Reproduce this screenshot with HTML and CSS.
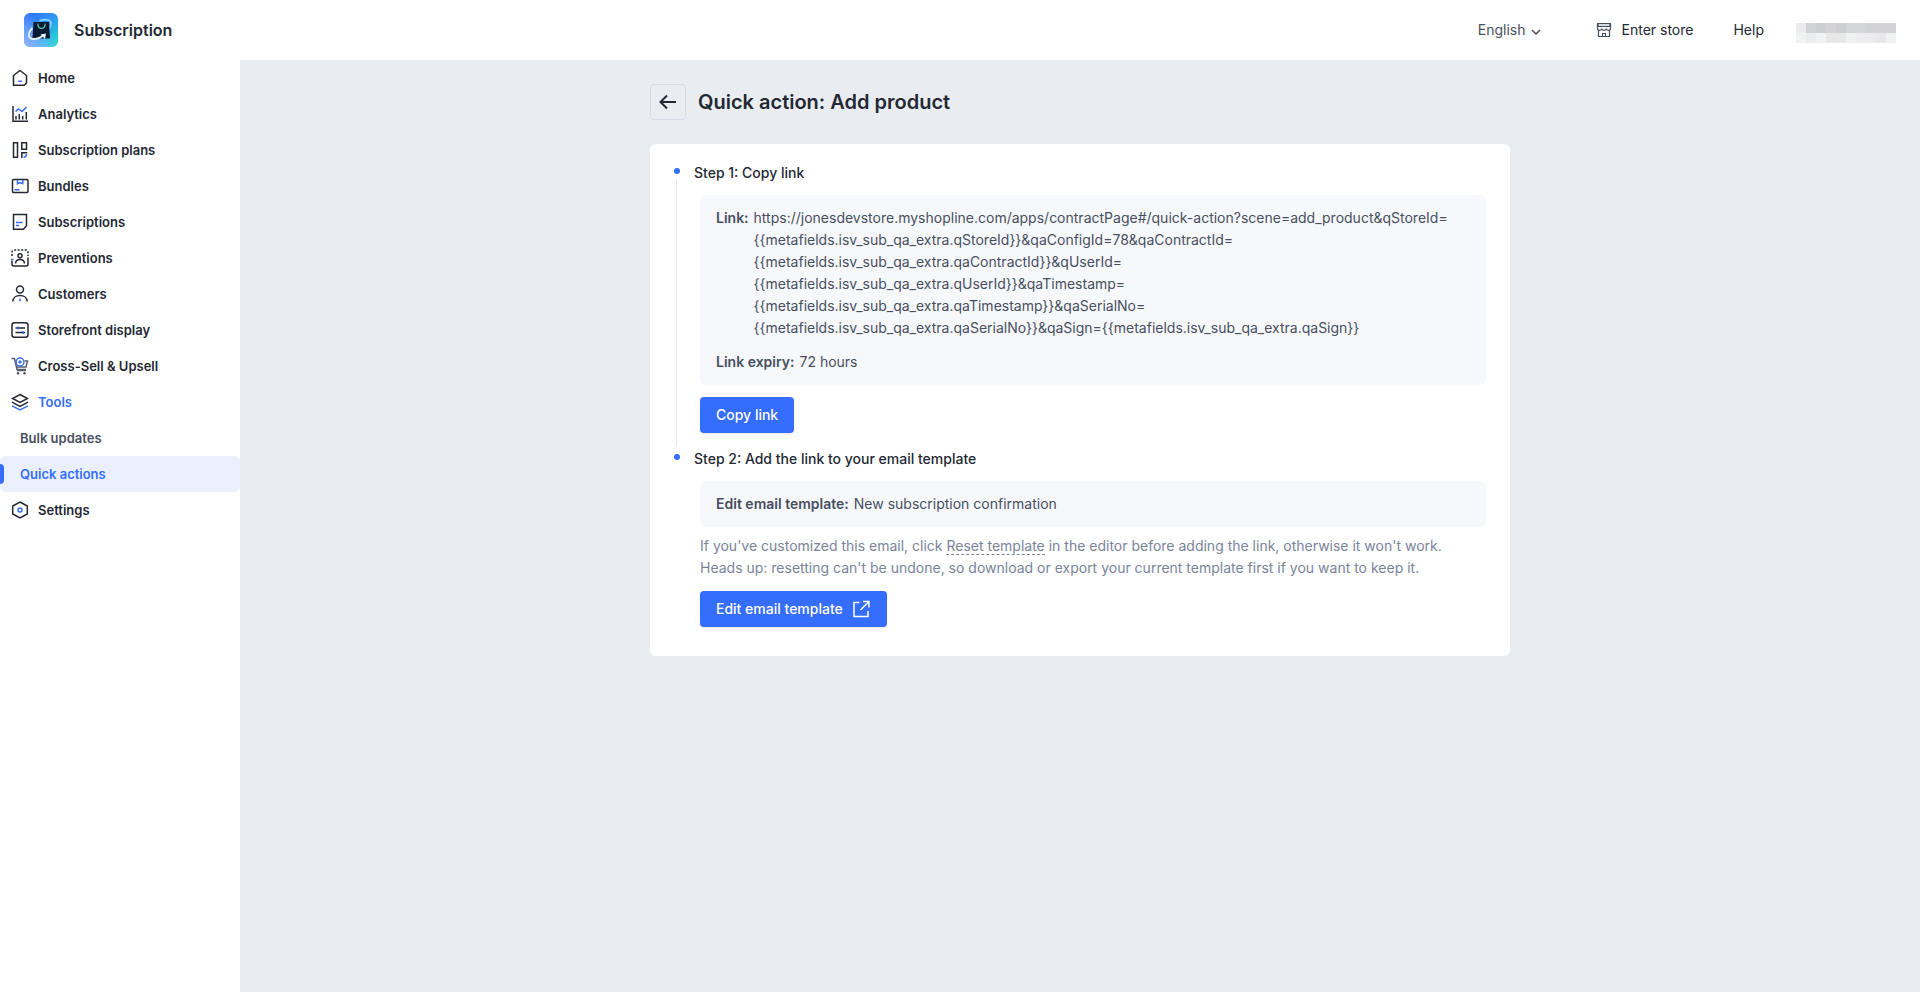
FILE: index.html
```html
<!DOCTYPE html>
<html lang="en">
<head>
    <meta charset="UTF-8">
    <meta name="viewport" content="width=device-width, initial-scale=1.0">
    <title>Subscription</title>
    <link rel="stylesheet" href="styles.css">
</head>
<body>

    <!-- Header -->
    <header class="header">
        <a class="brand" href="#">
            <svg class="logo" viewBox="0 0 34 34">
                <defs>
                    <linearGradient id="logo-bg" x1="0" y1="0" x2="1" y2="1">
                        <stop offset="0" stop-color="#2f6bff"/>
                        <stop offset="0.5" stop-color="#2f97f5"/>
                        <stop offset="1" stop-color="#1be8c8"/>
                    </linearGradient>
                    <linearGradient id="logo-glow" x1="0" y1="1" x2="0.6" y2="0.4">
                        <stop offset="0" stop-color="#9cb4ff"/>
                        <stop offset="1" stop-color="#9cb4ff" stop-opacity="0"/>
                    </linearGradient>
                </defs>
                <rect width="34" height="34" rx="6" fill="url(#logo-bg)"/>
                <rect width="34" height="34" rx="6" fill="url(#logo-glow)"/>
                <path d="M15.500 8c5-2.500 11.500-1.500 11.500 2.500 0 2.500-1 4.500-3 7" fill="none" stroke="#8fd4fb" stroke-width="1.600"/>
                <path d="M9.500 9h15.500l1 16.500H8.500z" fill="#071a33"/>
                <path d="M13.800 10.500c0 6.500 7.400 6.500 7.400 0" fill="none" stroke="#54cfa6" stroke-width="1.200"/>
                <path d="M8.500 15C3 20 4 26 9.500 26c4 0 7.500-1.500 10-4" fill="none" stroke="#e4f3ff" stroke-width="1.800"/>
                <path d="M16.500 21.500l5.500-1-1 5.500z" fill="#e4f3ff"/>
            </svg>
            <span>Subscription</span>
        </a>
        <nav class="header-nav">
            <button class="language" type="button">
                English
                <svg viewBox="0 0 10 10"><path d="M1 3l4 4 4-4"/></svg>
            </button>
            <a class="store-link" href="#">
                <svg viewBox="0 0 16 16">
                    <path d="M2 1.500h12v3H2z" fill="#d5d9e2"/>
                    <path d="M1.500 4.500h13M1.500 6.500c0 2.500 4 2.500 4.300 0 .3 2.500 4.100 2.500 4.400 0 .3 2.500 4.300 2.500 4.300 0v-5h-13zM2.500 8.500v6h11v-6M6.500 14.500v-3h3v3"/>
                </svg>
                Enter store
            </a>
            <a class="help-link" href="#">Help</a>
            <span class="account">
                <i class="c2"></i><i class="c6"></i><i class="c7"></i><i class="c6"></i><i class="c7"></i><i class="c5"></i><i class="c5"></i><i class="c6"></i><i class="c6"></i><i class="c6"></i>
                <i class="c1"></i><i class="c2"></i><i class="c1"></i><i class="c3"></i><i class="c3"></i><i class="c1"></i><i class="c2"></i><i class="c2"></i><i class="c3"></i><i class="c1"></i>
            </span>
        </nav>
    </header>

    <div class="layout">
        <!-- Sidebar -->
        <nav class="sidebar">
            <a href="#">
                <svg viewBox="0 0 18 18"><path d="M9 1.500l6.500 5V14l-2.200 2.300H2.500V6.500z"/><path class="blue" d="M7.300 12.300h3.600"/></svg>
                Home
            </a>
            <a href="#">
                <svg viewBox="0 0 18 18"><path d="M2 1v15.300h15M5 11v3.500M8.300 9v5.500M11.700 11v3.500M15.300 7v7.500"/><path class="blue" d="M4.500 6.500L7.500 4l3.500 2.500L15.500 2"/></svg>
                Analytics
            </a>
            <a href="#">
                <svg viewBox="0 0 18 18"><path d="M2.500 1.700h4v14.600h-4zM10.800 1.700h4.700v6.500h-4.700zM10.800 17v-5.300h5.400"/><path class="blue" d="M15.500 13c0 2.500-1 3.300-3 3.300"/></svg>
                Subscription plans
            </a>
            <a href="#">
                <svg viewBox="0 0 18 18"><rect x="1.500" y="2.500" width="15.500" height="13" rx="1"/><path class="blue" d="M6.500 3v3.700L9 5.500l2.800 1.200V3M3.500 12.700h5"/></svg>
                Bundles
            </a>
            <a href="#">
                <svg viewBox="0 0 18 18"><path d="M2.500 1.500h13v11.300L12.500 16.300h-10z"/><path class="blue" d="M5 9.500h6.500M5 12.500h3"/></svg>
                Subscriptions
            </a>
            <a href="#">
                <svg viewBox="0 0 18 18"><path d="M1 11.500V15q0 2 2 2h12q2 0 2-2V8.500M4.500 14.500c.3-5.500 8.700-5.500 9 0"/><circle cx="9" cy="6.800" r="2"/><path d="M1 7V3q0-2 2-2h12q2 0 2 2v4" stroke-dasharray="2 1.500"/><path class="blue" d="M0 10.500h2.500"/></svg>
                Preventions
            </a>
            <a href="#">
                <svg viewBox="0 0 18 18"><circle cx="9" cy="4.500" r="3.500"/><path d="M1.800 16.500c0-8 14.400-8 14.400 0"/><path class="blue" d="M9 13.500v2.800"/></svg>
                Customers
            </a>
            <a href="#">
                <svg viewBox="0 0 18 18"><rect x="1" y="1.700" width="16" height="14.600" rx="2.500"/><path d="M4.500 7h9.500M4.500 11.500h9.500"/><path class="blue" d="M7 5.500v3M12 10v3"/></svg>
                Storefront display
            </a>
            <a href="#">
                <svg viewBox="0 0 18 18"><path class="grey" d="M.5 1.500h3L6 12.500h9M4.500 6.500M13.500 4h3l-1.500 6H6M6 13.500h9"/><circle class="dot" cx="7" cy="16.200" r="1.200"/><circle class="dot" cx="13.500" cy="16.200" r="1.200"/><circle class="blue" cx="9" cy="5" r="4"/><path class="blue" d="M7.300 5h3.400M9 3.300v3.400"/></svg>
                Cross-Sell &amp; Upsell
            </a>
            <a class="current" href="#">
                <svg viewBox="0 0 18 18"><path d="M9 1.500l7.500 4L9 9.500l-7.500-4zM1 9.200l8 4.200 8-4.200"/><path class="blue" d="M1 12.800l8 4 8-4"/></svg>
                Tools
            </a>
            <a class="sub" href="#">Bulk updates</a>
            <a class="sub active" href="#">Quick actions</a>
            <a href="#">
                <svg viewBox="0 0 18 18"><path d="M9 1l7.300 4v8L9 17l-7.300-4V5z"/><circle class="blue" cx="9" cy="9" r="2"/></svg>
                Settings
            </a>
        </nav>

        <!-- Content -->
        <main class="content">
            <div class="page">
                <div class="page-title">
                    <button class="back" type="button" aria-label="Back">
                        <svg viewBox="0 0 18 16"><path d="M17 8H2M8 1.500L1.500 8 8 14.500"/></svg>
                    </button>
                    <h1>Quick action: Add product</h1>
                </div>

                <div class="card">
                    <section class="step">
                        <h2>Step 1: Copy link</h2>
                        <div class="step-body">
                            <dl class="info">
                                <div>
                                    <dt>Link:</dt>
                                    <dd>https://jonesdevstore.myshopline.com/apps/contractPage#/quick-action?scene=add_product&amp;qStoreId=<wbr>{{metafields.isv_sub_qa_extra.qStoreId}}&amp;qaConfigId=78&amp;qaContractId=<wbr>{{metafields.isv_sub_qa_extra.qaContractId}}&amp;qUserId=<wbr>{{metafields.isv_sub_qa_extra.qUserId}}&amp;qaTimestamp=<wbr>{{metafields.isv_sub_qa_extra.qaTimestamp}}&amp;qaSerialNo=<wbr>{{metafields.isv_sub_qa_extra.qaSerialNo}}&amp;qaSign={{metafields.isv_sub_qa_extra.qaSign}}</dd>
                                </div>
                                <div>
                                    <dt>Link expiry:</dt>
                                    <dd>72 hours</dd>
                                </div>
                            </dl>
                            <button class="btn" type="button">Copy link</button>
                        </div>
                    </section>

                    <section class="step">
                        <h2>Step 2: Add the link to your email template</h2>
                        <div class="step-body">
                            <dl class="info">
                                <div>
                                    <dt>Edit email template:</dt>
                                    <dd>New subscription confirmation</dd>
                                </div>
                            </dl>
                            <p class="hint">
                                If you've customized this email, click <a href="#">Reset template</a> in the editor before adding the link, otherwise it won't work.<br>
                                Heads up: resetting can't be undone, so download or export your current template first if you want to keep it.
                            </p>
                            <button class="btn" type="button">
                                Edit email template
                                <svg viewBox="0 0 20 20"><path d="M8.500 3.500H3v14h14V12M12 2.500h6v6M18 2.500L9.500 11"/></svg>
                            </button>
                        </div>
                    </section>
                </div>
            </div>
        </main>
    </div>

</body>
</html>
```
FILE: styles.css
```css
* {
    margin: 0;
    padding: 0;
    box-sizing: border-box;
}

body {
    min-height: 100vh;
    display: flex;
    flex-direction: column;
    font-family: "Inter", sans-serif;
    font-size: 14px;
    line-height: 22px;
    color: #242833;
    background: #fff;
}

a {
    color: inherit;
    text-decoration: none;
}

button {
    font: inherit;
    color: inherit;
    background: none;
    border: none;
    cursor: pointer;
}

svg {
    flex: none;
    fill: none;
    stroke: currentColor;
    stroke-width: 1.5;
}

/* Header */
.header {
    height: 60px;
    padding: 0 24px;
    display: flex;
    align-items: center;
    justify-content: space-between;
}

.brand {
    display: flex;
    align-items: center;
    gap: 16px;
    font-size: 16px;
    font-weight: 600;
}

.logo {
    width: 34px;
    height: 34px;
    stroke: none;
}

.header-nav {
    display: flex;
    align-items: center;
}

.language {
    display: flex;
    align-items: center;
    gap: 5px;
    margin-right: 55px;
    color: #474f5e;
}

.language svg {
    width: 10px;
    height: 10px;
    margin-top: 4px;
}

.store-link {
    display: flex;
    align-items: center;
    gap: 10px;
    margin-right: 40px;
}

.store-link svg {
    width: 16px;
    height: 16px;
    stroke: #474f5e;
    stroke-width: 1.2;
}

.help-link {
    margin-right: 32px;
}

.account {
    display: grid;
    grid-template-columns: repeat(10, 10px);
    grid-auto-rows: 10px;
    margin-top: 6px;
}

.c1 { background: #f1f2f2; }
.c2 { background: #ececee; }
.c3 { background: #e8e8e8; }
.c5 { background: #d5d6d8; }
.c6 { background: #d3d3d5; }
.c7 { background: #cdced2; }

/* Sidebar */
.layout {
    flex: 1;
    display: flex;
}

.sidebar {
    width: 240px;
    flex: none;
}

.sidebar a {
    position: relative;
    display: flex;
    align-items: center;
    gap: 9px;
    height: 36px;
    padding-left: 11px;
    font-size: 13px;
    font-weight: 600;
}

.sidebar svg {
    width: 18px;
    height: 18px;
    color: #242833;
}

.sidebar .blue {
    stroke: #356dff;
}

.sidebar .grey {
    stroke: #5a5f6b;
}

.sidebar .dot {
    fill: #474f5e;
    stroke: none;
}

.sidebar .current {
    color: #356dff;
}

.sidebar .sub {
    padding-left: 20px;
    color: #474f5e;
}

.sidebar .active {
    color: #356dff;
    background: #eaf0ff;
    border-radius: 6px;
}

.sidebar .active::before {
    content: "";
    position: absolute;
    left: 0;
    top: 8px;
    width: 4px;
    height: 20px;
    background: #356dff;
    border-radius: 0 4px 4px 0;
}

/* Content */
.content {
    flex: 1;
    padding: 24px;
    background: #e9edf2;
}

.page {
    max-width: 860px;
    margin: 0 auto;
}

.page-title {
    display: flex;
    align-items: center;
    gap: 12px;
    margin-bottom: 24px;
}

.page-title h1 {
    font-size: 20px;
    line-height: 28px;
    font-weight: 600;
}

.back {
    width: 36px;
    height: 36px;
    display: flex;
    align-items: center;
    justify-content: center;
    border: 1px solid #d6dbe7;
    border-radius: 4px;
}

.back svg {
    width: 18px;
    height: 16px;
    stroke-width: 2;
}

.card {
    padding: 18px 24px 29px;
    background: #fff;
    border-radius: 6px;
}

.step {
    position: relative;
    padding-left: 20px;
}

.step + .step {
    margin-top: 15px;
}

.step h2 {
    margin-bottom: 11px;
    font-size: 14px;
    font-weight: 500;
}

/* timeline dot and line */
.step::before {
    content: "";
    position: absolute;
    left: 0;
    top: 6px;
    width: 6px;
    height: 6px;
    border-radius: 50%;
    background: #356dff;
}

.step:not(:last-child)::after {
    content: "";
    position: absolute;
    left: 2px;
    top: 18px;
    bottom: -13px;
    width: 1px;
    background: #e2e6ee;
}

.step-body {
    padding-left: 6px;
}

.info {
    display: grid;
    gap: 12px;
    padding: 12px 16px;
    background: #f7f8fc;
    border-radius: 6px;
    color: #474f5e;
}

.info div {
    display: flex;
    gap: 5px;
}

.info dt {
    flex: none;
    font-weight: 600;
}

.hint {
    margin-top: 8px;
    color: #7a8499;
}

.hint a {
    border-bottom: 1px dashed #7a8499;
}

.btn {
    display: flex;
    align-items: center;
    gap: 8px;
    height: 36px;
    margin-top: 12px;
    padding: 0 16px;
    font-weight: 500;
    color: #fff;
    background: #356dff;
    border-radius: 4px;
    box-shadow: 0 1px 2px rgba(0, 0, 0, 0.1);
}

.btn svg {
    width: 20px;
    height: 20px;
}
```
